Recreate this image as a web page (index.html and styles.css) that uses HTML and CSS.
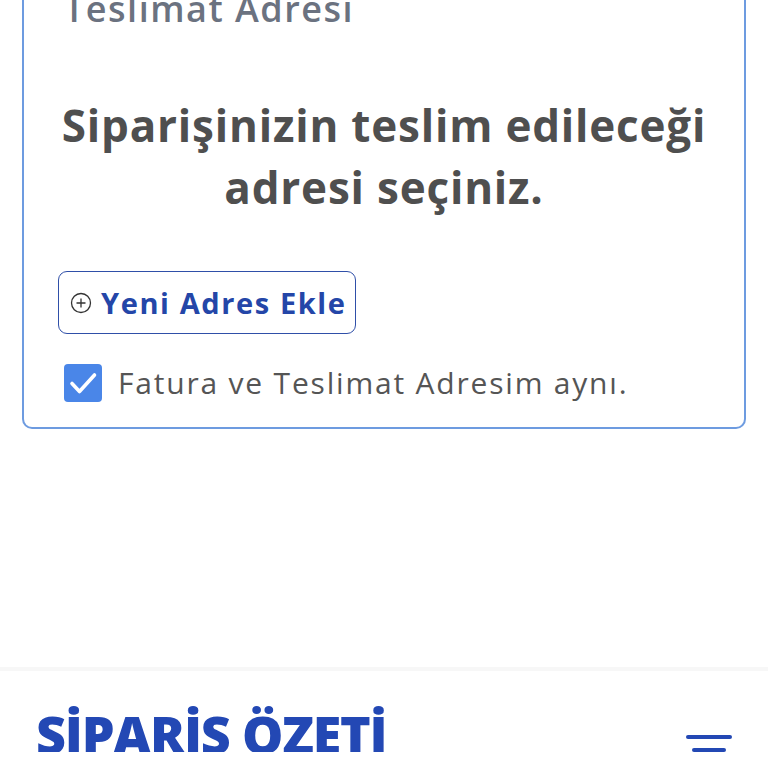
FILE: index.html
```html
<!DOCTYPE html>
<html>

<head>
    <title>Teslimat Adresi</title>
    <link rel="stylesheet" href="styles.css">
</head>

<body>
    <div class="page">
        <div class="address-card">
            <h3 class="card-title">Teslimat Adresi</h3>
            <p class="card-info">Siparişinizin teslim edileceği adresi seçiniz.</p>
            <button type="button" class="add-address">
                <svg class="plus-icon" width="22" height="22" viewBox="0 0 22 22">
                    <circle cx="11" cy="11" r="9.5" fill="none" stroke="#333" stroke-width="1.3" />
                    <path d="M11 6.5v9M6.5 11h9" stroke="#333" stroke-width="1.3" />
                </svg>
                Yeni Adres Ekle
            </button>
            <label class="same-address">
                <span class="check-box">
                    <svg width="38" height="38" viewBox="0 0 38 38">
                        <path d="M8 19.5l7.5 8L30.5 11" fill="none" stroke="#fff" stroke-width="3.6" stroke-linecap="round" stroke-linejoin="round" />
                    </svg>
                </span>
                Fatura ve Teslimat Adresim aynı.
            </label>
        </div>

        <div class="summary">
            <h2 class="summary-title">SİPARİŞ ÖZETİ</h2>
            <div class="summary-toggle">
                <span class="bar bar-long"></span>
                <span class="bar bar-short"></span>
            </div>
        </div>
    </div>
</body>

</html>
```

FILE: styles.css
```css
body {
    margin: 0;
    font-family: "Open Sans", Arial, sans-serif;
    background-color: #ffffff;
    overflow: hidden;
}

.page {
    height: 768px;
}

.address-card {
    margin: -16px 22px 0 22px;
    padding: 0 40px 24px 40px;
    border: 2px solid #6d9be0;
    border-top: none;
    border-radius: 0 0 10px 10px;
}

.card-title {
    margin: 0;
    font-size: 36px;
    font-weight: 600;
    letter-spacing: 1.5px;
    color: #6b7280;
    line-height: 50px;
}

.card-info {
    margin: 60px -20px 53px -20px;
    text-align: center;
    font-size: 44px;
    font-weight: 700;
    letter-spacing: 0.8px;
    line-height: 62px;
    color: #4f4f4f;
}

.add-address {
    display: flex;
    align-items: center;
    gap: 9px;
    padding: 0 8px 0 11px;
    height: 63px;
    margin-left: -6px;
    background: #ffffff;
    border: 1.5px solid #2f4fa8;
    border-radius: 9px;
    font-family: inherit;
    font-size: 29px;
    font-weight: 700;
    letter-spacing: 1.6px;
    color: #2446a8;
}

.same-address {
    display: flex;
    align-items: center;
    gap: 16px;
    margin-top: 28px;
    font-size: 30px;
    letter-spacing: 1.8px;
    color: #555555;
}

.check-box {
    width: 38px;
    height: 38px;
    border-radius: 4px;
    background-color: #4a86e8;
    display: flex;
    align-items: center;
    justify-content: center;
}

.summary {
    margin-top: 238px;
    border-top: 4px solid #f7f7f7;
    display: flex;
    justify-content: space-between;
    align-items: flex-start;
    padding: 28px 36px 0 36px;
}

.summary-title {
    margin: 0;
    font-size: 52px;
    font-weight: 800;
    letter-spacing: -1.2px;
    color: #2348b4;
    line-height: 70px;
}

.summary-toggle {
    display: flex;
    flex-direction: column;
    align-items: center;
    gap: 9px;
    margin-top: 36px;
}

.bar {
    height: 4px;
    border-radius: 2px;
    background-color: #2348b4;
}

.bar-long {
    width: 46px;
}

.bar-short {
    width: 34px;
}
```
